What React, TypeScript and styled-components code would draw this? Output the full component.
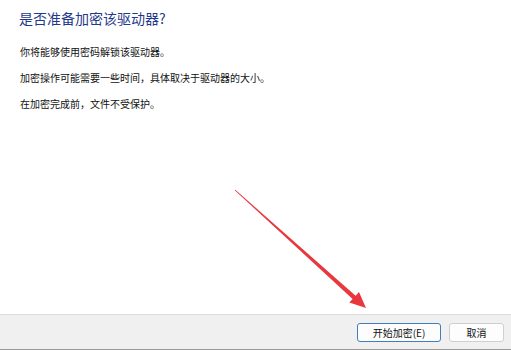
import styled, { createGlobalStyle } from "styled-components";

const GlobalStyle = createGlobalStyle`
  html, body {
    margin: 0;
    padding: 0;
    background: #ffffff;
  }
  body {
    font-family: "Noto Sans CJK SC", "Noto Sans", sans-serif;
  }
`;

const Dialog = styled.div`
  position: relative;
  box-sizing: border-box;
  width: 511px;
  height: 350px;
  display: flex;
  flex-direction: column;
  background: #ffffff;
  overflow: hidden;
`;

const Content = styled.div`
  flex: 1;
  padding: 8px 19px 0 19px;
`;

const Title = styled.h1`
  margin: 0 0 17px 0;
  font-size: 14px;
  line-height: 20px;
  font-weight: 400;
  color: #1f3a8c;
`;

const Paragraph = styled.p`
  margin: 0 0 12px 1px;
  font-size: 10px;
  line-height: 14px;
  color: #111111;
`;

const Footer = styled.div`
  box-sizing: border-box;
  height: 36px;
  display: flex;
  align-items: center;
  justify-content: flex-end;
  gap: 8px;
  padding: 0 7px 0 0;
  background: #f0f0f0;
  border-top: 1px solid #dcdcdc;
  border-bottom: 1px solid #9a9a9a;
`;

const Button = styled.button<{ $primary?: boolean; $width: number }>`
  box-sizing: border-box;
  width: ${({ $width }) => $width}px;
  height: 19px;
  padding: 0;
  font-family: "Noto Sans CJK SC", "Noto Sans", sans-serif;
  font-size: 10px;
  line-height: 17px;
  color: #111111;
  background: #fdfdfd;
  border: 1px solid ${({ $primary }) => ($primary ? "#3f7fbf" : "#cfcfcf")};
  border-radius: 3px;
`;

const ArrowLayer = styled.svg`
  position: absolute;
  left: 0;
  top: 0;
  pointer-events: none;
`;

// annotation arrow, tapering shaft + triangular head
const arrowPoints = [
  "234.7,190.3",
  "352.6,299.0",
  "349.3,302.6",
  "366,308",
  "359.0,292.0",
  "355.6,295.7",
  "235.3,189.7",
].join(" ");

export default function App() {
  return (
    <>
      <GlobalStyle />
      <Dialog>
        <Content>
          <Title>是否准备加密该驱动器?</Title>
          <Paragraph>你将能够使用密码解锁该驱动器。</Paragraph>
          <Paragraph>加密操作可能需要一些时间，具体取决于驱动器的大小。</Paragraph>
          <Paragraph>在加密完成前，文件不受保护。</Paragraph>
        </Content>
        <Footer>
          <Button $primary $width={84}>开始加密(E)</Button>
          <Button $width={55}>取消</Button>
        </Footer>
        <ArrowLayer width="511" height="350" viewBox="0 0 511 350">
          <polygon points={arrowPoints} fill="#e8383d" />
        </ArrowLayer>
      </Dialog>
    </>
  );
}
